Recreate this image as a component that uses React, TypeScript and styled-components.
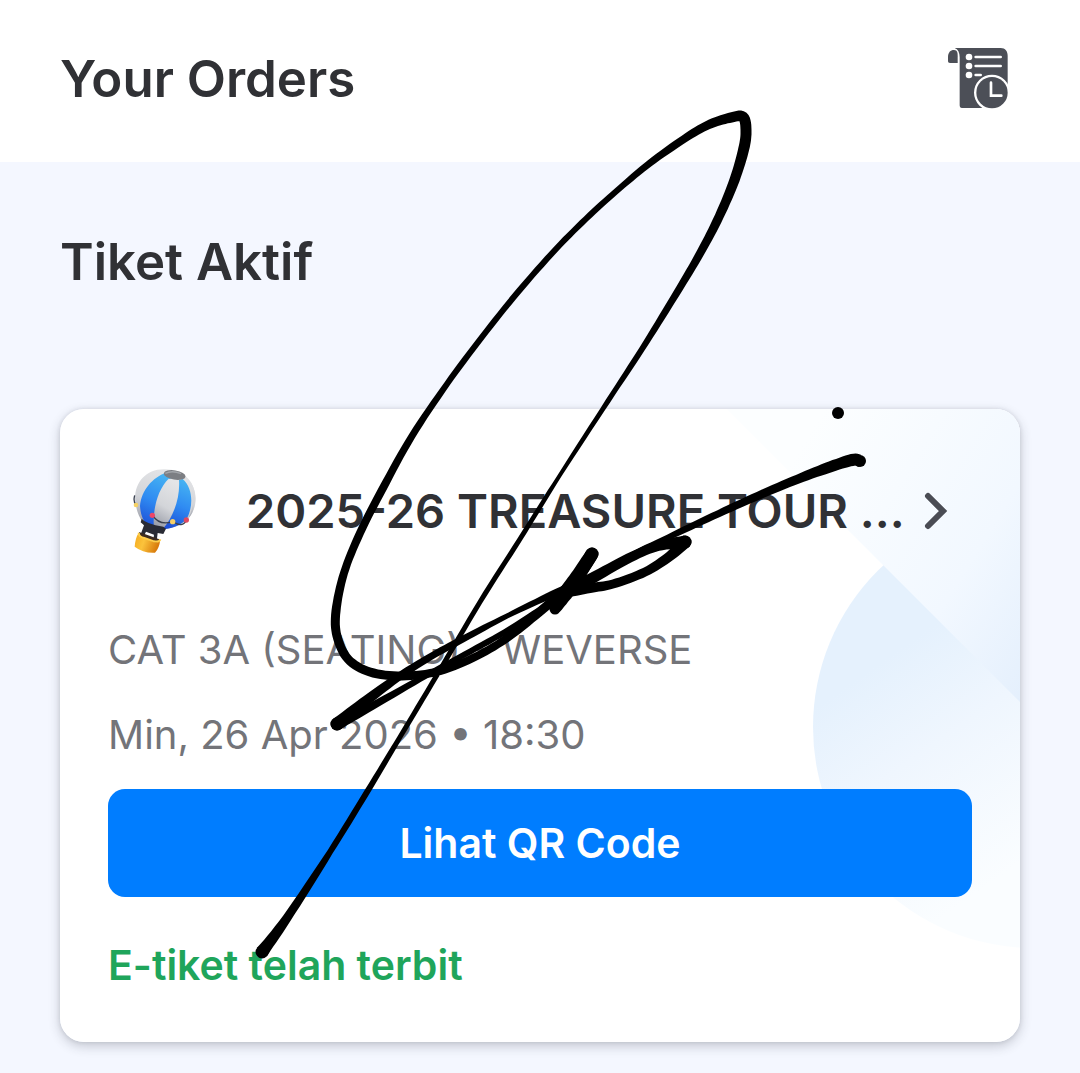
import React from "react";
import styled, { createGlobalStyle } from "styled-components";

const GlobalStyle = createGlobalStyle`
  *, *::before, *::after { box-sizing: border-box; }
  html { min-height: 100%; background: #f4f7ff; }
  body { margin: 0; font-family: Inter, "Noto Sans", sans-serif; color: #303135; }
`;

const Page = styled.div`
  position: relative;
  overflow: hidden;
`;

const Header = styled.header`
  display: flex;
  align-items: center;
  justify-content: space-between;
  padding: 44px 64px 48px 60px;
  background: #fff;
`;

const Heading = styled.h1`
  margin: 0;
  font-size: 51px;
  line-height: 70px;
  font-weight: 600;
`;

const HistoryButton = styled.button`
  display: flex;
  padding: 0;
  border: 0;
  background: none;
  cursor: pointer;
`;

const Main = styled.main`
  display: flex;
  flex-direction: column;
  gap: 112px;
  padding: 65px 60px 32px;
`;

const SectionHeading = styled(Heading).attrs({ as: "h2" })``;

const Card = styled.article`
  position: relative;
  overflow: hidden;
  display: flex;
  flex-direction: column;
  padding: 56px 48px 48px;
  border-radius: 24px;
  background: #fff;
`;

const CardShadow = styled.div`
  border-radius: 24px;
  box-shadow: 0 4px 12px rgba(40, 44, 60, 0.24), 0 0 4px rgba(40, 44, 60, 0.12);
`;

const CardArt = styled.svg`
  position: absolute;
  top: 0;
  right: 0;
`;

const EventLink = styled.a`
  position: relative;
  display: flex;
  align-items: center;
  padding: 0 24px 0 22px;
  color: inherit;
  text-decoration: none;
`;

const EventName = styled.span`
  flex: 1;
  min-width: 0;
  margin: 0 16px 0 46px;
  overflow: hidden;
  white-space: nowrap;
  font-size: 47px;
  line-height: 92px;
  font-weight: 600;
`;

const Details = styled.div`
  position: relative;
  display: flex;
  flex-direction: column;
  gap: 28px;
  padding: 64px 0 26px;
`;

const Detail = styled.p`
  margin: 0;
  color: #737479;
  font-size: 40px;
  line-height: 57px;
`;

const QrButton = styled.button`
  position: relative;
  height: 108px;
  border: 0;
  border-radius: 17px;
  background: #007dff;
  color: #fff;
  font: inherit;
  font-size: 41px;
  font-weight: 600;
  cursor: pointer;
`;

const Status = styled.p`
  position: relative;
  margin: 0;
  padding-top: 40px;
  color: #1fa55b;
  font-size: 41px;
  line-height: 57px;
  font-weight: 600;
`;

const Ink = styled.svg`
  position: absolute;
  top: 0;
  left: 0;
  pointer-events: none;
`;

type InkPoint = [x: number, y: number, width: number];

const strokes: InkPoint[][] = [
  [
    [262, 952, 13], [287, 918, 9], [330, 852, 6], [367, 792, 6], [400, 737, 5], [437, 675, 5],
    [480, 602, 5], [520, 539, 5], [560, 475, 4], [608, 401, 5], [642, 349, 6], [673, 299, 7],
    [698, 257, 8], [717, 221, 9], [733, 184, 10], [743, 152, 11], [746, 132, 11], [743, 117, 11],
    [729, 118, 10], [708, 125, 9], [684, 139, 8], [650, 163, 7], [620, 188, 6], [590, 215, 6],
    [556, 249, 6], [518, 292, 6], [482, 337, 6], [447, 384, 6], [412, 436, 7], [383, 488, 8],
    [360, 533, 8], [344, 573, 8], [336, 611, 9], [337, 636, 9], [348, 659, 9], [370, 672, 9],
    [402, 676, 9], [440, 671, 8], [477, 656, 8], [510, 636, 8], [543, 609, 9], [565, 590, 10],
    [580, 573, 12], [592, 554, 13],
  ],
  [[592, 554, 13], [577, 577, 14], [565, 594, 15], [555, 609, 11]],
  [
    [860, 461, 12], [852, 460, 12], [827, 468, 11], [793, 481, 9], [753, 498, 8], [707, 519, 7],
    [663, 540, 6], [623, 560, 8], [587, 579, 8], [553, 594, 7], [507, 616, 5], [463, 639, 7],
    [430, 657, 7], [400, 676, 8], [367, 700, 10], [337, 724, 13],
  ],
  [
    [337, 724, 13], [367, 709, 8], [420, 679, 6], [460, 657, 6], [505, 632, 6], [550, 604, 7],
    [587, 583, 8], [630, 558, 9], [658, 546, 10], [685, 542, 13],
  ],
  [[685, 542, 13], [670, 556, 10], [645, 572, 9], [613, 584, 9], [590, 588, 10], [565, 592, 12]],
];

/** Turns a pressure-weighted pen stroke into a smooth, closed outline. */
function outline(points: InkPoint[]): string {
  const left: string[] = [];
  const right: string[] = [];
  const steps = 8;
  for (let i = 0; i < points.length - 1; i++) {
    const p0 = points[Math.max(i - 1, 0)];
    const p1 = points[i];
    const p2 = points[i + 1];
    const p3 = points[Math.min(i + 2, points.length - 1)];
    for (let s = 0; s <= steps; s++) {
      const t = s / steps;
      const at = (k: 0 | 1) =>
        0.5 * (2 * p1[k] + (p2[k] - p0[k]) * t +
          (2 * p0[k] - 5 * p1[k] + 4 * p2[k] - p3[k]) * t * t +
          (3 * p1[k] - p0[k] - 3 * p2[k] + p3[k]) * t * t * t);
      const slope = (k: 0 | 1) =>
        0.5 * (p2[k] - p0[k] + 2 * (2 * p0[k] - 5 * p1[k] + 4 * p2[k] - p3[k]) * t +
          3 * (3 * p1[k] - p0[k] - 3 * p2[k] + p3[k]) * t * t);
      const dx = slope(0);
      const dy = slope(1);
      const len = Math.hypot(dx, dy) || 1;
      const half = (p1[2] + (p2[2] - p1[2]) * t) / 2;
      const ox = (-dy / len) * half;
      const oy = (dx / len) * half;
      left.push(`${(at(0) + ox).toFixed(1)} ${(at(1) + oy).toFixed(1)}`);
      right.unshift(`${(at(0) - ox).toFixed(1)} ${(at(1) - oy).toFixed(1)}`);
    }
  }
  return `M${left.join("L")}L${right.join("L")}Z`;
}

const Signature = () => (
  <Ink width="1080" height="1073" viewBox="0 0 1080 1073" aria-hidden="true">
    {strokes.map((points, i) => {
      const last = points[points.length - 1];
      return (
        <g key={i}>
          <path d={outline(points)} />
          <circle cx={points[0][0]} cy={points[0][1]} r={points[0][2] / 2} />
          <circle cx={last[0]} cy={last[1]} r={last[2] / 2} />
        </g>
      );
    })}
    <circle cx="838" cy="413" r="6" />
  </Ink>
);

const HistoryIcon = () => (
  <svg width="70" height="70" viewBox="0 0 210 210" aria-hidden="true">
    <path d="M6 51V39C6 26 13 18 24 18S35 27 35 39V57H12C8 57 6 55 6 51Z" fill="#4c4f57" />
    <path d="M26 12H164C178 12 185 22 185 35V192H48C43 192 41 189 41 184V40C41 25 36 16 26 12Z" fill="#4c4f57" />
    <g fill="#fff">
      <circle cx="69" cy="39" r="10" />
      <circle cx="69" cy="66" r="10" />
      <circle cx="69" cy="93" r="10" />
    </g>
    <g stroke="#fff" strokeWidth="8" strokeLinecap="round">
      <path d="M89 39H164M89 66H164M89 93H104" />
    </g>
    <path d="M138 92A54 54 0 0 1 192 146V200H138A54 54 0 0 1 138 92Z" fill="#fff" />
    <circle cx="138" cy="146" r="47" fill="#4c4f57" />
    <path d="M135 116V155H166" fill="none" stroke="#fff" strokeWidth="8" strokeLinecap="round" />
  </svg>
);

const Balloon = () => (
  <svg width="70" height="90" viewBox="60 50 210 270" aria-hidden="true">
    <defs>
      <linearGradient id="blue" x1="0.6" y1="0" x2="0.35" y2="1">
        <stop offset="0" stopColor="#45b2f2" />
        <stop offset="0.5" stopColor="#2f8bf2" />
        <stop offset="1" stopColor="#1d4fd6" />
      </linearGradient>
      <linearGradient id="silver" x1="0.6" y1="0" x2="0.3" y2="1">
        <stop offset="0" stopColor="#e4e5e7" />
        <stop offset="0.55" stopColor="#d3d5d9" />
        <stop offset="1" stopColor="#989ba6" />
      </linearGradient>
      <linearGradient id="basket" x1="0" y1="0" x2="1" y2="0.3">
        <stop offset="0" stopColor="#f5a91c" />
        <stop offset="0.45" stopColor="#fbc33c" />
        <stop offset="1" stopColor="#d97c0c" />
      </linearGradient>
    </defs>
    <path d="M165 60C105 58 70 105 76 158C81 198 98 228 128 240L168 238C215 234 256 205 257 148C257 98 216 60 165 60Z" fill="url(#silver)" />
    <path d="M168 70C128 84 94 122 90 170C92 198 100 218 116 230L134 240C134 180 147 125 183 86Z" fill="url(#blue)" />
    <path d="M176 88C139 124 127 190 132 240H158C192 197 208 142 207 92Z" fill="url(#silver)" />
    <path d="M207 92C211 145 191 202 158 240C182 238 207 230 228 212C252 172 249 116 218 89Z" fill="url(#blue)" />
    <path d="M222 84C250 112 258 160 236 206C260 181 268 113 226 80Z" fill="url(#silver)" />
    <ellipse cx="194" cy="77" rx="33" ry="14" transform="rotate(9 194 77)" fill="#7c7e83" />
    <path d="M166 72Q187 62 213 73" fill="none" stroke="#a2a5aa" strokeWidth="4" />
    <path d="M74 138Q69 158 78 166M128 198Q148 230 188 217M190 217Q217 237 230 212" fill="none" stroke="#39404f" strokeWidth="4" />
    <path d="M95 208Q108 224 160 232L168 238L160 254L143 251L139 283L129 278L132 256L108 247L99 266L91 258L102 228L92 219Z" fill="#292b35" />
    <path d="M87 248L148 270L144 286L91 269Z" fill="#3c2b20" />
    <path d="M86 250Q84 260 96 264L132 278Q148 282 151 270Q148 298 135 310Q100 312 74 292Q76 266 86 250Z" fill="url(#basket)" />
    <path d="M86 250Q86 262 103 266L132 276Q147 279 151 270" fill="none" stroke="#ffce4a" strokeWidth="6" />
    <circle cx="78" cy="167" r="7" fill="#f5d164" />
    <circle cx="127" cy="198" r="8" fill="#ee4668" />
    <circle cx="188" cy="217" r="8" fill="#f5cf68" />
    <circle cx="229" cy="212" r="8" fill="#df4961" />
  </svg>
);

const Chevron = () => (
  <svg width="24" height="40" viewBox="0 0 24 40" aria-hidden="true">
    <path d="M4 5L19 20L4 35" fill="none" stroke="#4a4c54" strokeWidth="6" strokeLinecap="round" />
  </svg>
);

const Backdrop = () => (
  <CardArt width="293" height="540" viewBox="0 0 293 540" aria-hidden="true">
    <defs>
      <linearGradient id="disc" gradientUnits="userSpaceOnUse" x1="130" y1="270" x2="270" y2="470">
        <stop offset="0" stopColor="#e5f1fd" />
        <stop offset="0.4" stopColor="#eff6fe" />
        <stop offset="1" stopColor="#fafdff" />
      </linearGradient>
      <linearGradient id="corner" gradientUnits="userSpaceOnUse" x1="60" y1="60" x2="350" y2="240">
        <stop offset="0" stopColor="#fcfeff" />
        <stop offset="0.6" stopColor="#f2f8ff" />
        <stop offset="1" stopColor="#e2eefc" />
      </linearGradient>
    </defs>
    <circle cx="307" cy="318" r="221" fill="url(#disc)" />
    <path d="M0 0H293V293Z" fill="url(#corner)" />
  </CardArt>
);

export default function App() {
  return (
    <Page>
      <GlobalStyle />
      <Header>
        <Heading>Your Orders</Heading>
        <HistoryButton type="button" aria-label="Order history">
          <HistoryIcon />
        </HistoryButton>
      </Header>
      <Main>
        <SectionHeading>Tiket Aktif</SectionHeading>
        <CardShadow>
          <Card>
            <Backdrop />
            <EventLink href="#order">
              <Balloon />
              <EventName>2025-26 TREASURE TOUR ...</EventName>
              <Chevron />
            </EventLink>
            <Details>
              <Detail>CAT 3A (SEATING) - WEVERSE</Detail>
              <Detail>Min, 26 Apr 2026 • 18:30</Detail>
            </Details>
            <QrButton type="button">Lihat QR Code</QrButton>
            <Status>E-tiket telah terbit</Status>
          </Card>
        </CardShadow>
      </Main>
      <Signature />
    </Page>
  );
}
